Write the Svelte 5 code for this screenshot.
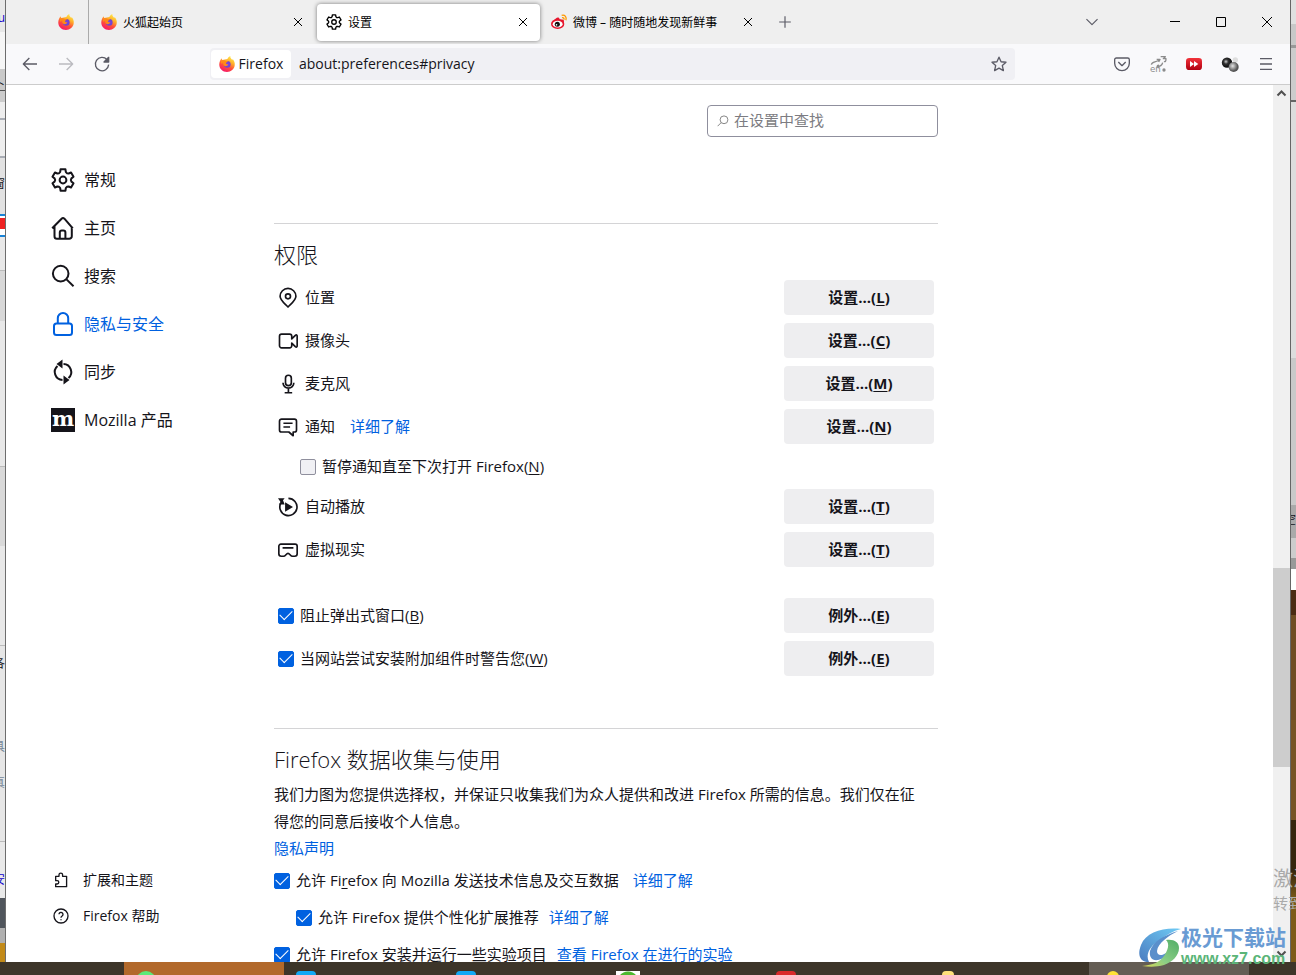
<script>
	const tabs = [
		{ icon: 'firefox', text: '火狐起始页' },
		{ icon: 'gear', text: '设置', active: true },
		{ icon: 'weibo', text: '微博 – 随时随地发现新鲜事' }
	];

	const categories = [
		{ icon: 'gear', text: '常规', path: '#general' },
		{ icon: 'home', text: '主页', path: '#home' },
		{ icon: 'search', text: '搜索', path: '#search' },
		{ icon: 'lock', text: '隐私与安全', path: '#privacy', active: true },
		{ icon: 'sync', text: '同步', path: '#sync' },
		{ icon: 'mozilla', text: 'Mozilla 产品', path: '#moreFromMozilla' }
	];

	const permissions = [
		{ icon: 'location', text: '位置', key: 'L' },
		{ icon: 'camera', text: '摄像头', key: 'C' },
		{ icon: 'microphone', text: '麦克风', key: 'M' },
		{ icon: 'notification', text: '通知', key: 'N', link: '详细了解', pause: true },
		{ icon: 'autoplay', text: '自动播放', key: 'T' },
		{ icon: 'xr', text: '虚拟现实', key: 'T' }
	];

	const exceptions = [
		{ id: 'popup', text: '阻止弹出式窗口', key: 'B' },
		{ id: 'addons', text: '当网站尝试安装附加组件时警告您', key: 'W' }
	];

	const tasks = ['wechat', 'blue', 'blue', 'browser', 'red', 'folder', 'bell'];

	// six teeth, the first one points up
	function gearPath() {
		const steps = [
			[-13, 11],
			[13, 11],
			[19, 8.6],
			[30, 7.8],
			[41, 8.6]
		];
		const points = [];
		for (let tooth = 0; tooth < 6; tooth++) {
			for (const [offset, r] of steps) {
				const a = ((tooth * 60 + offset - 90) * Math.PI) / 180;
				points.push(`${(12 + r * Math.cos(a)).toFixed(2)} ${(12 + r * Math.sin(a)).toFixed(2)}`);
			}
		}
		return `M${points.join('L')}Z`;
	}
	const gear = gearPath();
</script>

{#snippet icon(name)}
	<svg class="icon {name}" viewBox="0 0 24 24" aria-hidden="true">
		{#if name === 'gear'}
			<path d={gear} />
			<circle cx="12" cy="12" r="3.4" />
		{:else if name === 'home'}
			<path d="M1.2 12.3 10.6 2.7a2 2 0 0 1 2.8 0l8.4 9.6M3.5 10.5v9.7A2.6 2.6 0 0 0 6 22.8h12.2a2.6 2.6 0 0 0 2.6-2.6v-9.7M8.8 22.5v-6a2 2 0 0 1 2-2h1.6a2 2 0 0 1 2 2v6" />
		{:else if name === 'search'}
			<circle cx="9.7" cy="9.6" r="7.8" />
			<path d="m15.5 15.4 7 6.8" />
		{:else if name === 'lock'}
			<rect x="3" y="11.5" width="18" height="11.5" rx="2.5" />
			<path d="M6.8 11.5V6.2a5.2 5.2 0 0 1 10.4 0v5.3" />
		{:else if name === 'sync'}
			<path d="M11.5 20A8 8 0 0 1 6.5 6M12.5 4a8 8 0 0 1 5 14" />
			<path class="solid" stroke="none" d="m5.5 4 6-4.5v9ZM18.5 20l-6 4.5v-9Z" />
		{:else if name === 'location'}
			<path d="M12 22.8C8.5 19 2.5 15 2.5 10a9.5 9.5 0 0 1 19 0c0 5-6 9-9.5 12.8Z" />
			<circle cx="12" cy="10" r="3" />
		{:else if name === 'camera'}
			<path d="M16.5 9.5V6.3a2.5 2.5 0 0 0-2.5-2.5H4.3a2.5 2.5 0 0 0-2.5 2.5v11.4a2.5 2.5 0 0 0 2.5 2.5H14a2.5 2.5 0 0 0 2.5-2.5v-3.2l4.3 4.3c1.2 1 2.2.4 2.2-.8v-12c0-1.2-1-1.8-2.2-.8Z" />
		{:else if name === 'microphone'}
			<rect x="9" y="1.5" width="7" height="12.5" rx="3.5" />
			<path d="M6 10.5a6.5 6.5 0 0 0 13 0M12.5 17v5M8 22.5h9" />
		{:else if name === 'notification'}
			<path d="M4.3 2.5h15.4A2.5 2.5 0 0 1 22.2 5v10.5a2.5 2.5 0 0 1-2.5 2.5h-1.5v4.5L13 18H4.3a2.5 2.5 0 0 1-2.5-2.5V5a2.5 2.5 0 0 1 2.5-2.5ZM6.5 7.5h11M6.5 12h8" />
		{:else if name === 'autoplay'}
			<path d="M3.5 7A10.3 10.3 0 1 0 12.5 1.7" />
			<path class="solid" stroke="none" d="m8.5 6.2 9.5 5.8-9.5 5.8ZM0 1.5h8l-2 2.3 2 5.2H1l2-3Z" />
		{:else if name === 'xr'}
			<path d="M3.5 5h17A2.5 2.5 0 0 1 23 7.5v9a3 3 0 0 1-3 3h-2.5c-2.7 0-3.3-3.5-5.5-3.5s-2.8 3.5-5.5 3.5H4a3 3 0 0 1-3-3v-9A2.5 2.5 0 0 1 3.5 5ZM5.5 9.5h13" />
		{:else if name === 'extension'}
			<path d="M4 9V6.5h5V4.3a2.7 2.7 0 0 1 5.4 0v2.2h6V22H4v-4h2.2a2.5 2.5 0 0 0 0-5H4Z" />
		{:else if name === 'help'}
			<circle cx="12" cy="12" r="10.5" />
			<path d="M9 9.5a3 3 0 1 1 4.7 2.5c-1.2.8-1.7 1.2-1.7 2.5M12 17v1.5" />
		{:else if name === 'mozilla'}
			<rect class="solid" width="24" height="24" stroke="none" />
			<text x="12" y="18" text-anchor="middle">m</text>
		{:else if name === 'firefox'}
			<path fill="url(#fire)" stroke="none" d="M12.5 4.5C13.5 2 15.5 1 17 0c-.5 2.5 1 4 3 6l.6-1.5C23 7.5 24 10 23.6 14c-.7 6-5.5 10-11.6 10C5.5 24 .4 19 .4 12.8.4 9 2 6 4 3.5c0 1 .3 1.8 1 2.5Z" />
			<circle cx="12.4" cy="12.6" r="5" fill="url(#globe)" stroke="none" />
			<path fill="#ff8a16" stroke="none" d="M3 8c2.5-2 5-2 7-.5 1.5.3 2.8 0 3.5.5-.7 1.7-3 1.5-3 3 .2 1.7 2 1.7 3.5 1.4-1 3-4.5 3.6-6.5 2C6 13 6 11 6.8 9.8 5 10 4 11 3 12.5Z" />
		{:else if name === 'weibo'}
			<ellipse cx="10" cy="15" rx="10" ry="7.5" fill="#e6162d" stroke="none" />
			<path d="M3 12C6 7 10 4 12 6s0 3 0 3 6-2 7 0 0 4 0 4" fill="#e6162d" stroke="none" />
			<ellipse cx="10" cy="15.3" rx="7.4" ry="5" fill="#fff" stroke="none" />
			<circle cx="9.5" cy="15.5" r="3.8" fill="#111" stroke="none" />
			<circle cx="8.3" cy="16.3" r="1.2" fill="#fff" stroke="none" />
			<path d="M16 2c5-1.5 8 3 6.3 7.5M16.5 5.5c2.2-.5 3.5 1 2.8 3" stroke="#f90" stroke-width="2" />
		{:else if name === 'close'}
			<path d="m6 6 12 12M18 6 6 18" />
		{:else if name === 'plus'}
			<path d="M12 2v20M2 12h20" />
		{:else if name === 'chevron'}
			<path d="m2.5 7 9.5 9.5L21.5 7" />
		{:else if name === 'back'}
			<path d="M22.5 12H2M11 3l-9 9 9 9" />
		{:else if name === 'forward'}
			<path d="M1.5 12H22M13 3l9 9-9 9" />
		{:else if name === 'reload'}
			<path d="M19.5 5.5A10 10 0 1 0 22 13" />
			<path class="solid" d="M22 2v7h-7Z" />
		{:else if name === 'star'}
			<path d="m12 1.8 3.1 6.8 7.4.8-5.5 5 1.6 7.6-6.6-3.7L5.4 22 7 14.400l-5.500-5 7.400-.8Z" />
		{:else if name === 'pocket'}
			<path d="M3.5 3h17A2.5 2.5 0 0 1 23 5.5V11a11 11 0 0 1-22 0V5.5A2.5 2.5 0 0 1 3.5 3ZM6.5 9l5.5 5.5L17.5 9" />
		{:else if name === 'translate'}
			<path d="M2 13c1-5 6-3 12-7M10 5h5l-2 4M10 16c4 0 8-1 9-6M10 16l3-3M10 16l4 2M16 1h7l-3 3h4c0 4-1 5-3 4" stroke="#8b8b8b" />
			<text x="0" y="24">en</text>
			<circle cx="21" cy="21" r="2.5" fill="#8b8b8b" stroke="none" />
		{:else if name === 'skip'}
			<rect y="3" width="24" height="18" rx="5" fill="url(#red)" stroke="none" />
			<path d="m6 7.5 6 4.5-6 4.5ZM12 7.5l6.5 4.5-6.5 4.5Z" fill="#fff" stroke="none" />
		{:else if name === 'molecule'}
			<circle cx="20" cy="6" r="4" fill="#dedede" stroke="none" />
			<circle cx="7.5" cy="10" r="7.8" fill="url(#black)" stroke="none" />
			<circle cx="17.5" cy="16.5" r="7.5" fill="url(#grey)" stroke="none" />
		{:else if name === 'menu'}
			<path d="M3 4h18M3 12h18M3 20h18" />
		{/if}
	</svg>
{/snippet}

<svg class="defs" width="0" height="0" aria-hidden="true">
	<defs>
		<linearGradient id="fire" x1="0.8" y1="0" x2="0.3" y2="1">
			<stop offset="0" stop-color="#fff14f" />
			<stop offset="0.35" stop-color="#ffb02a" />
			<stop offset="0.65" stop-color="#ff4f3a" />
			<stop offset="1" stop-color="#f5156c" />
		</linearGradient>
		<radialGradient id="globe">
			<stop offset="0" stop-color="#7a3df0" />
			<stop offset="1" stop-color="#7047c8" />
		</radialGradient>
		<linearGradient id="red" x2="0" y2="1">
			<stop offset="0" stop-color="#f2323a" />
			<stop offset="1" stop-color="#b00010" />
		</linearGradient>
		<radialGradient id="black" cx="0.4" cy="0.4">
			<stop offset="0" stop-color="#ccc" />
			<stop offset="0.45" stop-color="#333" />
			<stop offset="1" stop-color="#111" />
		</radialGradient>
		<radialGradient id="grey" cx="0.4" cy="0.4">
			<stop offset="0" stop-color="#e5e5e5" />
			<stop offset="1" stop-color="#555" />
		</radialGradient>
		<linearGradient id="swirl-blue" x1="1" y1="0" x2="0" y2="1">
			<stop offset="0" stop-color="#6fcbf5" />
			<stop offset="1" stop-color="#4a7cc0" />
		</linearGradient>
		<linearGradient id="swirl-green" x1="1" y1="0" x2="0" y2="1">
			<stop offset="0" stop-color="#52ad68" />
			<stop offset="0.6" stop-color="#8ccf85" />
			<stop offset="1" stop-color="#ded94f" />
		</linearGradient>
	</defs>
</svg>

<div class="desktop">
	<div class="screen">
		<div class="behind left" aria-hidden="true">
			<span style:top="10px" class="blue">u</span>
			<span style:top="76px">卜</span>
			<span style:top="176px">窗</span>
			<span style:top="656px">各</span>
			<span style:top="739px" class="soft">具</span>
			<span style:top="775px" class="soft">真</span>
			<span style:top="872px" class="blue">安</span>
		</div>

		<div class="window">
			<div class="tab-bar">
				<button class="pinned" aria-label="Firefox">{@render icon('firefox')}</button>
				{#each tabs as tab}
					<div class="tab" class:active={tab.active}>
						{@render icon(tab.icon)}
						<span class="title">{tab.text}</span>
						<button class="tab-close" aria-label="关闭标签页">{@render icon('close')}</button>
					</div>
				{/each}
				<button class="new-tab" aria-label="新建标签页">{@render icon('plus')}</button>
				<button class="all-tabs" aria-label="列出所有标签页">{@render icon('chevron')}</button>
				<button class="control" aria-label="最小化">
					<svg viewBox="0 0 10 10"><path d="M0 4.5h10" /></svg>
				</button>
				<button class="control" aria-label="最大化">
					<svg viewBox="0 0 10 10"><path d="M.5.5h9v9h-9Z" /></svg>
				</button>
				<button class="control" aria-label="关闭">
					<svg viewBox="0 0 10 10"><path d="m0 0 10 10M10 0 0 10" /></svg>
				</button>
			</div>

			<div class="toolbar">
				<button class="tool" aria-label="后退">{@render icon('back')}</button>
				<button class="tool" aria-label="前进" disabled>{@render icon('forward')}</button>
				<button class="tool" aria-label="刷新">{@render icon('reload')}</button>
				<div class="urlbar">
					<button class="identity">{@render icon('firefox')}<span>Firefox</span></button>
					<input class="url" aria-label="网址" value="about:preferences#privacy" />
					<button class="tool" aria-label="添加书签">{@render icon('star')}</button>
				</div>
				{#each ['pocket', 'translate', 'skip', 'molecule', 'menu'] as name}
					<button class="tool" aria-label={name}>{@render icon(name)}</button>
				{/each}
			</div>

			<div class="page">
				<nav>
					{#each categories as item}
						<a class="category" class:active={item.active} href={item.path}>
							{@render icon(item.icon)}<span>{item.text}</span>
						</a>
					{/each}
					<a class="footer-link first" href="#addons">{@render icon('extension')}<span>扩展和主题</span></a>
					<a class="footer-link" href="#help">{@render icon('help')}<span>Firefox 帮助</span></a>
				</nav>

				<main>
					<label class="search-box">
						<svg viewBox="0 0 12 12" aria-hidden="true">
							<circle cx="7" cy="4.8" r="3.9" />
							<path d="M4.2 7.6.6 11.2" />
						</svg>
						<input type="search" placeholder="在设置中查找" aria-label="在设置中查找" />
					</label>

					<section class="permissions">
						<h2>权限</h2>
						{#each permissions as item}
							<div class="row">
								{@render icon(item.icon)}
								<span>{item.text}</span>
								{#if item.link}
									<a href="#learn-more">{item.link}</a>
								{/if}
								<button class="setting"><span>设置...(<u>{item.key}</u>)</span></button>
							</div>
							{#if item.pause}
								<label class="pause">
									<input type="checkbox" />
									<span>暂停通知直至下次打开 Firefox(<u>N</u>)</span>
								</label>
							{/if}
						{/each}
						<div class="exceptions">
							{#each exceptions as item}
								<div class="row">
									<label for={item.id}>
										<input type="checkbox" id={item.id} checked />
										<span>{item.text}(<u>{item.key}</u>)</span>
									</label>
									<button class="setting"><span>例外...(<u>E</u>)</span></button>
								</div>
							{/each}
						</div>
					</section>

					<section class="collection">
						<h2>Firefox 数据收集与使用</h2>
						<p>
							我们力图为您提供选择权，并保证只收集我们为众人提供和改进 Firefox 所需的信息。我们仅在征得您的同意后接收个人信息。
						</p>
						<p><a href="#privacy-notice">隐私声明</a></p>
						<div class="check">
							<label>
								<input type="checkbox" checked />
								<span>允许 Fi<u>r</u>efox 向 Mozilla 发送技术信息及交互数据</span>
							</label>
							<a class="apart" href="#telemetry">详细了解</a>
						</div>
						<div class="check nested">
							<label>
								<input type="checkbox" checked />
								<span>允许 Firefox 提供个性化扩展推荐</span>
							</label>
							<a href="#recommendations">详细了解</a>
						</div>
						<div class="check">
							<label>
								<input type="checkbox" checked />
								<span>允许 Firefox 安装并运行一些实验项目</span>
							</label>
							<a class="underlined" href="#studies">查看 Firefox 在进行的实验</a>
						</div>
					</section>
				</main>

				<div class="scrollbar" aria-hidden="true">
					<svg viewBox="0 0 17 17"><path d="m4.5 10.5 4-4 4 4" /></svg>
					<div class="track"><div class="thumb"></div></div>
					<svg viewBox="0 0 17 17"><path d="m4.5 6.5 4 4 4-4" /></svg>
				</div>
			</div>
		</div>

		<div class="behind right" aria-hidden="true">
			<span style:top="512px">空</span>
		</div>
	</div>

	<div class="taskbar">
		{#each tasks as task}
			<div class="task {task}"><i></i></div>
		{/each}
	</div>

	<div class="activate">
		<div class="big">激活</div>
		<div>转到</div>
	</div>

	<div class="watermark">
		<svg viewBox="0 0 42 40" aria-hidden="true">
			<path fill="url(#swirl-blue)" d="M42 1C25-1 7 4 2 17c-4 10-1 17 8 17-4-8 1-16 11-22C27 7 34 3 42 1Z" />
			<path fill="#5a8fcb" d="M39 3C26 7 14 13 11 23c-1 6 2 10 8 9 5-1 8-4 8-7-4 3-9 3-9-2C19 15 29 8 39 3Z" />
			<path fill="url(#swirl-green)" d="M27 12c8-1 13 2 13 8 0 8-7 14-15 17-7 2-14 2-22 1 11-1 18-4 22-10 4-6 6-12 2-16Z" />
		</svg>
		<div>
			<div class="site">极光下载站</div>
			<div class="address">www.xz7.com</div>
		</div>
	</div>
</div>

<style>
	:global(body) {
		font-family: 'Open Sans', 'Noto Sans CJK SC', sans-serif;
		font-size: 15px;
		color: #15141a;
	}
	* {
		box-sizing: border-box;
	}
	button {
		display: flex;
		align-items: center;
		justify-content: center;
		padding: 0;
		border: 0;
		background: none;
		font: inherit;
		color: inherit;
	}
	a {
		color: #0061e0;
		text-decoration: none;
	}
	u {
		text-underline-offset: 2px;
	}
	.defs {
		position: absolute;
	}
	.icon {
		flex: none;
		width: 16px;
		height: 16px;
		fill: none;
		stroke: currentColor;
		stroke-width: 2;
		stroke-linejoin: round;
		overflow: visible;
	}
	.solid {
		fill: currentColor;
	}
	.icon text {
		stroke: none;
		fill: #fff;
		font: bold 21px 'DejaVu Serif', serif;
	}
	.icon.translate text {
		fill: #8b8b8b;
		font: 13px 'DejaVu Sans', sans-serif;
	}

	.desktop {
		position: relative;
		display: flex;
		flex-direction: column;
		height: 100vh;
		overflow: hidden;
	}
	.screen {
		flex: 1;
		min-height: 0;
		display: flex;
	}
	.behind {
		position: relative;
		flex: none;
		width: 6px;
		overflow: hidden;
		font-size: 12px;
		line-height: 16px;
	}
	.behind span {
		position: absolute;
		right: 0;
	}
	.behind.left {
		border-right: 1px solid #6d6d6d;
		background: linear-gradient(
			#e8e8e8 32px, #f6f6f6 32px 69px, #c9c9c9 69px 90px, #555 90px 91px, #ccc 91px 102px,
			#eee 102px 118px, #a9adb5 118px 120px, #eee 120px 156px, #a9adb5 156px 158px,
			#e2e2e2 158px 214px, #1883d7 214px 216px, #fff 216px 218px, #e22 218px 229px,
			#fff 229px 235px, #1883d7 235px 237px, #e8e8e8 237px 270px, #bbb 270px 271px,
			#d8d8d8 271px 321px, #e8e8e8 321px 466px, #bbb 466px 467px, #d9d9d9 467px 546px,
			#e8e8e8 546px 645px, #bbb 645px 646px, #e6e6e6 646px 841px, #bbb 841px 842px,
			#e9e9e9 842px 898px, #50555c 898px 928px, #b0b0b0 928px 943px, #c28a18 943px
		);
	}
	.behind.right {
		border-left: 1px solid #666;
		background: linear-gradient(
			#e0e0e0 24px, #c8c8c8 24px 45px, #999 45px 48px, #ccc 48px 100px, #666 100px 102px,
			#ddd 102px 358px, #c9c9c9 358px 505px, #aaa 505px 538px, #ccc 538px 558px, #999 558px 569px,
			#fff 569px 590px, #4a2b13 590px 615px, #6f4d24 615px 720px, #765426 720px 820px, #35260f 820px 870px, #7d5a18 900px
		);
	}
	.behind .blue {
		color: #10c;
	}
	.behind .soft {
		color: #789;
	}

	.window {
		flex: 1;
		min-width: 0;
		display: flex;
		flex-direction: column;
		background: #fff;
	}
	.tab-bar {
		flex: none;
		display: flex;
		align-items: center;
		gap: 2px;
		height: 44px;
		padding-left: 37px;
		background: #efefef;
		font-size: 12px;
		color: #000;
	}
	.pinned {
		width: 46px;
		height: 44px;
		margin-right: 1px;
		border-right: 1px solid #aaa;
	}
	.tab {
		flex: 0 1 223px;
		display: flex;
		align-items: center;
		gap: 6px;
		height: 37px;
		padding: 0 7px 0 9px;
		border-radius: 4px;
	}
	.tab.active {
		background: #fff;
		box-shadow: 0 0 4px rgba(0, 0, 0, 0.5);
	}
	.title {
		flex: 1;
		white-space: nowrap;
	}
	.tab-close {
		width: 20px;
		height: 20px;
	}
	.icon.close {
		stroke-width: 1.5;
	}
	.new-tab {
		width: 36px;
		height: 36px;
		color: #5b5b66;
	}
	.all-tabs {
		width: 36px;
		height: 36px;
		margin-left: auto;
		margin-right: 42px;
		color: #5b5b66;
	}
	.control {
		width: 46px;
		height: 44px;
		margin-left: -2px;
	}
	.control svg {
		width: 10px;
		height: 10px;
		fill: none;
		stroke: #000;
	}
	.all-tabs .icon,
	.new-tab .icon {
		width: 14px;
		height: 14px;
	}

	.toolbar {
		flex: none;
		display: flex;
		align-items: center;
		height: 41px;
		padding: 0 6px;
		border-bottom: 1px solid #ccc;
		background: #f9f9fb;
	}
	.tool {
		flex: none;
		width: 36px;
		height: 32px;
		color: #5b5b66;
	}
	.tool:disabled {
		color: #bbbbc0;
	}
	.urlbar {
		flex: 1;
		display: flex;
		align-items: center;
		height: 32px;
		margin: 0 89px 0 90px;
		padding-left: 1px;
		border-radius: 4px;
		background: #f0f0f4;
	}
	.urlbar .tool {
		width: 32px;
	}
	.identity {
		gap: 4px;
		width: 80px;
		height: 28px;
		border-radius: 4px;
		background: #fff;
		font-size: 14px;
	}
	.url {
		flex: 1;
		min-width: 0;
		padding: 0 8px 2px;
		border: 0;
		outline: 0;
		background: none;
		font: inherit;
		font-size: 14px;
		color: inherit;
	}

	.page {
		flex: 1;
		min-height: 0;
		display: flex;
		overflow: hidden;
	}
	nav {
		flex: none;
		display: flex;
		flex-direction: column;
		width: 268px;
		padding: 71px 0 28px 45px;
	}
	nav a {
		display: flex;
		align-items: center;
		color: #15141a;
	}
	/* glyphs sit low in their line box */
	.identity span,
	nav span,
	.row span,
	.row a,
	.pause span,
	.check span,
	.check a {
		padding-bottom: 2px;
	}
	.category {
		gap: 9px;
		height: 48px;
		font-size: 16px;
	}
	.category.active {
		color: #0061e0;
	}
	.category .icon {
		width: 24px;
		height: 24px;
	}
	.footer-link {
		gap: 14px;
		height: 36px;
		padding-left: 2px;
		font-size: 14px;
	}
	.footer-link.first {
		margin-top: auto;
	}

	main {
		flex: 0 1 664px;
		padding-top: 20px;
	}
	.search-box {
		display: flex;
		align-items: center;
		gap: 5px;
		width: 231px;
		height: 32px;
		margin-left: auto;
		padding: 0 9px;
		border: 1px solid #8f8f9d;
		border-radius: 4px;
	}
	.search-box svg {
		flex: none;
		width: 12px;
		height: 12px;
		fill: none;
		stroke: #888;
	}
	.search-box input {
		flex: 1;
		min-width: 0;
		padding: 0 0 2px;
		border: 0;
		outline: 0;
		background: none;
		font: inherit;
	}
	.search-box input::placeholder {
		color: #7c7c82;
	}
	section {
		padding-top: 14px;
		border-top: 1px solid #d4d4d6;
	}
	.permissions {
		margin-top: 86px;
	}
	.collection {
		margin-top: 52px;
	}
	h2 {
		margin: 0 0 10px;
		font-size: 22px;
		font-weight: 300;
		line-height: 32px;
	}
	.collection h2 {
		margin-bottom: 6px;
	}
	.row {
		display: flex;
		align-items: center;
		gap: 7px;
		height: 35px;
		padding: 0 4px;
	}
	.row + .row {
		margin-top: 8px;
	}
	.row .icon {
		width: 20px;
		height: 20px;
	}
	.row a {
		margin-left: 8px;
	}
	.setting {
		width: 150px;
		height: 35px;
		margin-left: auto;
		border-radius: 4px;
		background: #eeeef0;
		font-weight: 700;
	}
	label {
		display: flex;
		align-items: center;
		gap: 6px;
	}
	.pause {
		height: 45px;
		padding-left: 26px;
	}
	.exceptions {
		margin-top: 31px;
	}
	input[type='checkbox'] {
		appearance: none;
		flex: none;
		width: 16px;
		height: 16px;
		margin: 0;
		border: 1px solid #8f8f9d;
		border-radius: 2px;
		background: #f0f0f4;
	}
	input[type='checkbox']:checked {
		display: grid;
		place-items: center;
		border-color: #0061e0;
		background: #0061e0;
	}
	input[type='checkbox']:checked::after {
		content: '';
		width: 11px;
		height: 6px;
		margin-bottom: 4px;
		border: solid #fff;
		border-width: 0 0 1px 1px;
		transform: rotate(-45deg);
	}
	p {
		margin: 0;
		padding-right: 12px;
		line-height: 27px;
	}
	.check {
		display: flex;
		align-items: center;
		gap: 10px;
		height: 37px;
		white-space: nowrap;
	}
	.check.nested {
		padding-left: 22px;
	}
	.apart {
		margin-left: 4px;
	}
	.underlined {
		text-decoration: underline;
		text-underline-offset: 2px;
	}

	.scrollbar {
		flex: none;
		display: flex;
		flex-direction: column;
		width: 17px;
		margin-left: auto;
		background: #f0f0f0;
	}
	.scrollbar svg {
		flex: none;
		height: 17px;
		fill: none;
		stroke: #505050;
		stroke-width: 2;
	}
	.track {
		flex: 1;
		display: flex;
		flex-direction: column;
	}
	.track::before {
		content: '';
		flex: 466;
	}
	.track::after {
		content: '';
		flex: 178;
	}
	.thumb {
		flex: 199;
		background: #cdcdcd;
	}

	.taskbar {
		flex: none;
		display: flex;
		height: 13px;
		padding-left: 124px;
		overflow: hidden;
		background: #3d3529;
	}
	.task {
		flex: 0 1 160px;
		padding: 9px 0 0 12px;
	}
	.task i {
		display: block;
		width: 20px;
		height: 20px;
		border-radius: 4px;
	}
	.task.wechat {
		background: #b2692b;
	}
	.wechat i {
		border-radius: 50%;
		background: #5bea79;
	}
	.blue i {
		background: #12a8f5;
	}
	.browser i {
		width: 24px;
		border-radius: 0;
		background: radial-gradient(circle at 50% 11px, #4cb82e 10px, #fff 11px);
	}
	.red i {
		background: #d9292b;
	}
	.folder i {
		width: 12px;
		margin-left: 6px;
		background: #ffe07a;
	}
	.task.bell {
		margin-left: 5px;
		background: #645d54;
	}
	.bell i {
		width: 12px;
		margin-left: 6px;
		border-radius: 6px 6px 0 0;
		background: #fde235;
	}

	/* system text that lies over everything at the right edge */
	.activate {
		position: absolute;
		left: calc(100% - 23px);
		bottom: 61px;
		color: #aaa;
		font-size: 15px;
		line-height: 22px;
		white-space: nowrap;
	}
	.activate .big {
		font-size: 20px;
		line-height: 26px;
	}
	.watermark {
		position: absolute;
		right: 10px;
		bottom: 5px;
		display: flex;
		align-items: center;
		line-height: 22px;
	}
	.watermark svg {
		width: 42px;
		height: 40px;
	}
	.site {
		font-size: 21px;
		font-weight: 700;
		color: #699bd3;
	}
	.address {
		font-family: 'Liberation Sans', sans-serif;
		font-size: 16px;
		font-weight: 700;
		color: #5bb578;
	}
</style>
